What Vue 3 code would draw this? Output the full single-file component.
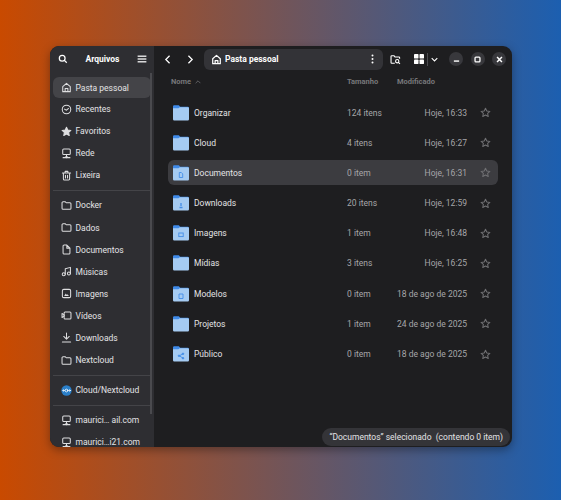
<template>
  <div class="desktop">
    <div class="window">
      <aside class="sidebar">
        <div class="side-head">
          <svg class="ico" viewBox="0 0 16 16" fill="none" stroke="#fff" stroke-width="2"><circle cx="6.7" cy="6.7" r="4.6" /><path d="M10.2 10.2 14 14" /></svg>
          <span class="app-title">Arquivos</span>
          <svg class="ico" viewBox="0 0 16 16" fill="#fff"><rect x="1" y="2.5" width="14" height="2" /><rect x="1" y="7" width="14" height="2" /><rect x="1" y="11.5" width="14" height="2" /></svg>
        </div>
        <div class="side-scroll">
          <template v-for="(group, g) in places" :key="g">
            <div v-if="g > 0" class="side-sep"></div>
            <div v-for="p in group" :key="p.label" class="place" :class="{ active: p.active }">
              <svg class="place-ico" viewBox="0 0 16 16" fill="none" stroke="#dedee0" stroke-width="1.5" stroke-linejoin="round" stroke-linecap="round" v-html="icons[p.icon]"></svg>
              <span>{{ p.label }}</span>
            </div>
          </template>
          <div class="side-bar"></div>
        </div>
      </aside>

      <main class="content">
        <div class="toolbar">
          <svg class="nav-ico" viewBox="0 0 16 16" fill="none" stroke="#fff" stroke-width="2"><path d="M10.5 2 4.500 8l6 6" /></svg>
          <svg class="nav-ico next" viewBox="0 0 16 16" fill="none" stroke="#fff" stroke-width="2"><path d="M5.500 2l6 6-6 6" /></svg>
          <div class="pathbar">
            <svg class="path-home" viewBox="0 0 16 16" fill="none" stroke="#fff" stroke-width="1.800" stroke-linejoin="round" v-html="icons.home"></svg>
            <span>Pasta pessoal</span>
            <svg class="dots" viewBox="0 0 4 14" fill="#fff"><circle cx="2" cy="2" r="1.400" /><circle cx="2" cy="7" r="1.400" /><circle cx="2" cy="12" r="1.400" /></svg>
          </div>
          <svg class="find" viewBox="0 0 16 16" fill="none" stroke="#fff" stroke-width="1.600" stroke-linejoin="round"><path d="M7 13.500H2.500a1 1 0 0 1-1-1v-9a1 1 0 0 1 1-1h3.200l1.500 1.800h5.800a1 1 0 0 1 1 1V7" /><circle cx="10.500" cy="10.500" r="2.400" /><path d="m12.300 12.300 2.200 2.200" /></svg>
          <svg class="grid" viewBox="0 0 12 12" fill="#fff"><rect x="0" y="0" width="5.400" height="5.400" rx="1" /><rect x="6.600" y="0" width="5.400" height="5.400" rx="1" /><rect x="0" y="6.600" width="5.400" height="5.400" rx="1" /><rect x="6.600" y="6.600" width="5.400" height="5.400" rx="1" /></svg>
          <i class="tool-sep"></i>
          <svg class="chev" viewBox="0 0 10 6" fill="none" stroke="#fff" stroke-width="1.500"><path d="m1 1 4 4 4-4" /></svg>
          <div class="win-btns">
            <span class="win-btn"><svg viewBox="0 0 8 8" fill="#fff"><rect x="1" y="5" width="6" height="1.600" /></svg></span>
            <span class="win-btn"><svg viewBox="0 0 8 8" fill="none" stroke="#fff" stroke-width="1.500"><rect x="1.200" y="1.200" width="5.600" height="5.600" rx="1" /></svg></span>
            <span class="win-btn"><svg viewBox="0 0 8 8" fill="none" stroke="#fff" stroke-width="1.700"><path d="m1.200 1.200 5.600 5.600M6.800 1.200 1.200 6.800" /></svg></span>
          </div>
        </div>

        <div class="cols">
          <span class="col-name">Nome
            <svg viewBox="0 0 10 6" fill="none" stroke="#77777a" stroke-width="1.200"><path d="m1 5 4-4 4 4" /></svg>
          </span>
          <span class="col-size">Tamanho</span>
          <span class="col-date">Modificado</span>
        </div>

        <div class="list">
          <div v-for="f in files" :key="f.name" class="row" :class="{ selected: f.selected }">
            <svg class="folder" viewBox="0 0 16 16">
              <path d="M0 1.500A1.200 1.200 0 0 1 1.200.3h4.600l1.400 1.400h7.600A1.200 1.200 0 0 1 16 2.900V6H0z" fill="#3f8ae8" />
              <path d="M0 3.200h5.400l1.300-1h8.100A1.200 1.200 0 0 1 16 3.400v10.900a1.200 1.200 0 0 1-1.200 1.200H1.200A1.200 1.200 0 0 1 0 14.300z" fill="#a5cbf2" />
              <g v-if="f.mark" fill="none" stroke="#438de6" stroke-width="0.900" v-html="marks[f.mark]"></g>
            </svg>
            <span class="f-name">{{ f.name }}</span>
            <span class="f-size">{{ f.size }}</span>
            <span class="f-date">{{ f.date }}</span>
            <svg class="star" viewBox="0 0 16 16" fill="none" stroke="#6f6f72" stroke-width="1.500" stroke-linejoin="round"><path d="m8 1.800 1.900 4.100 4.500.5-3.300 3 .9 4.500L8 11.600l-4 2.300.9-4.500-3.300-3 4.500-.5z" /></svg>
          </div>
        </div>

        <div class="status">“Documentos” selecionado&nbsp; (contendo 0 item)</div>
      </main>
    </div>
  </div>
</template>

<script setup>
const icons = {
  home: '<path d="M2.500 14V6.800L8 2l5.500 4.800V14zM6 14V9.500h4V14" />',
  clock: '<circle cx="8" cy="8" r="6.200" /><path d="M5 7.500 8 9l3-2.500" />',
  star: '<path fill="#dedee0" d="m8 1.800 1.900 4.100 4.500.5-3.300 3 .9 4.500L8 11.600l-4 2.300.9-4.500-3.300-3 4.500-.5z" />',
  net: '<rect x="2.500" y="1.500" width="11" height="8" rx="1.500" /><path d="M8 9.500V13M3 14h10" /><circle cx="8" cy="13" r="1" />',
  trash: '<path d="M3.500 4.500h9V13a1.500 1.500 0 0 1-1.500 1.500H5A1.500 1.500 0 0 1 3.500 13zM2 4.500h12M6 4V2h4v2M6.500 7.500v4M9.500 7.500v4" />',
  folder: '<path d="M1.500 4A1.500 1.500 0 0 1 3 2.500h3L7.500 4H13a1.500 1.500 0 0 1 1.500 1.500V12a1.500 1.500 0 0 1-1.500 1.500H3A1.500 1.500 0 0 1 1.500 12z" />',
  doc: '<path d="M3 3a1.500 1.500 0 0 1 1.500-1.500h4L13 6v7a1.500 1.500 0 0 1-1.500 1.500h-7A1.500 1.500 0 0 1 3 13zM8.500 1.500V6H13" />',
  music: '<circle cx="4" cy="12" r="2.200" /><circle cx="11.500" cy="11" r="2.200" /><path d="M6.200 12V4l7.500-2v9" />',
  image: '<rect x="2" y="2" width="12" height="12" rx="2" /><path fill="#dedee0" stroke="none" d="M4.500 11.500 7 8l1.500 2 1-1 2 2.500z" />',
  video: '<rect x="4.500" y="3" width="10" height="10" rx="1.500" /><path d="M1.500 5v6l3-2V7z" />',
  down: '<path d="M8 1.500V10M4 6.500l4 4 4-4M2 14.500h12" />',
  cloud: '<circle cx="8" cy="8" r="7.500" fill="#2a7fc9" stroke="none" /><g stroke="#fff" stroke-width="1.200"><circle cx="8" cy="8" r="2" /><circle cx="3.500" cy="8" r="1" /><circle cx="12.500" cy="8" r="1" /></g>'
}

const marks = {
  doc: '<path d="M6.300 7.500h2l1.400 1.400v3.600H6.300z" />',
  down: '<path d="M8 8v3M6.500 12.500h3" stroke-width="1.300" />',
  image: '<rect x="5.800" y="8" width="4.400" height="3.600" />',
  model: '<path d="M6 8h4v4.500H6z" />',
  share: '<path d="m10 7.800-3.600 2 3.600 2.400" /><circle cx="6" cy="9.800" r=".8" fill="#438de6" /><circle cx="10" cy="7.800" r=".8" fill="#438de6" /><circle cx="10" cy="12.200" r=".8" fill="#438de6" />'
}

const places = [
  [
    { label: 'Pasta pessoal', icon: 'home', active: true },
    { label: 'Recentes', icon: 'clock' },
    { label: 'Favoritos', icon: 'star' },
    { label: 'Rede', icon: 'net' },
    { label: 'Lixeira', icon: 'trash' }
  ],
  [
    { label: 'Docker', icon: 'folder' },
    { label: 'Dados', icon: 'folder' },
    { label: 'Documentos', icon: 'doc' },
    { label: 'Músicas', icon: 'music' },
    { label: 'Imagens', icon: 'image' },
    { label: 'Vídeos', icon: 'video' },
    { label: 'Downloads', icon: 'down' },
    { label: 'Nextcloud', icon: 'folder' }
  ],
  [{ label: 'Cloud/Nextcloud', icon: 'cloud' }],
  [
    { label: 'maurici… ail.com', icon: 'net' },
    { label: 'maurici…i21.com', icon: 'net' }
  ]
]

const files = [
  { name: 'Organizar', size: '124 itens', date: 'Hoje, 16:33' },
  { name: 'Cloud', size: '4 itens', date: 'Hoje, 16:27' },
  { name: 'Documentos', size: '0 item', date: 'Hoje, 16:31', mark: 'doc', selected: true },
  { name: 'Downloads', size: '20 itens', date: 'Hoje, 12:59', mark: 'down' },
  { name: 'Imagens', size: '1 item', date: 'Hoje, 16:48', mark: 'image' },
  { name: 'Mídias', size: '3 itens', date: 'Hoje, 16:25' },
  { name: 'Modelos', size: '0 item', date: '18 de ago de 2025', mark: 'model' },
  { name: 'Projetos', size: '1 item', date: '24 de ago de 2025' },
  { name: 'Público', size: '0 item', date: '18 de ago de 2025', mark: 'share' }
]
</script>

<style>
html,
body {
  margin: 0;
  background: #333;
}
</style>

<style scoped>
.desktop {
  width: 561px;
  height: 500px;
  box-sizing: border-box;
  padding: 46px 49px 53px 50px;
  background: linear-gradient(90deg, #c94a00, #1c5fb0);
  font-family: Roboto, "Noto Sans", sans-serif;
  font-size: 8.500px;
  overflow: hidden;
}

.window {
  display: flex;
  height: 100%;
  border-radius: 9px;
  overflow: hidden;
  background: #1e1e20;
  box-shadow: 0 3px 10px rgba(0, 0, 0, 0.35);
}

.sidebar {
  width: 104px;
  flex: none;
  display: flex;
  flex-direction: column;
  background: #2e2e32;
  color: #e4e4e6;
}

.side-head {
  height: 26px;
  flex: none;
  display: flex;
  align-items: center;
  justify-content: space-between;
  padding: 0 7px 1px 8px;
  color: #fff;
}

.ico {
  width: 10px;
  height: 10px;
}

.app-title {
  font-weight: 700;
}

.side-scroll {
  position: relative;
  flex: 1;
  padding: 4px 3px 0;
  overflow: hidden;
}

.place {
  height: 22.100px;
  display: flex;
  align-items: center;
  gap: 4px;
  padding-left: 7.500px;
  white-space: nowrap;
}

.place.active {
  background: #444448;
  border-radius: 6px;
  height: 21px;
}

.place-ico {
  width: 11px;
  height: 11px;
  flex: none;
}

.side-sep {
  height: 1px;
  background: #444448;
  margin: 4px 0 3px;
}

.side-bar {
  position: absolute;
  top: 0;
  right: 2px;
  width: 2px;
  height: 341px;
  background: #4a4a4e;
}

.content {
  position: relative;
  flex: 1;
  min-width: 0;
  color: #e3e3e5;
}

.toolbar {
  height: 26px;
  display: flex;
  align-items: center;
  padding: 0 6px 1px 9px;
}

.nav-ico {
  width: 10px;
  height: 11px;
  flex: none;
}

.nav-ico.next {
  margin-left: 12px;
}

.pathbar {
  width: 179px;
  height: 21px;
  flex: none;
  box-sizing: border-box;
  margin-left: 9px;
  display: flex;
  align-items: center;
  gap: 3px;
  padding: 0 9px 0 7px;
  background: #333337;
  border-radius: 6px;
  font-weight: 700;
  color: #fff;
}

.path-home {
  width: 11px;
  height: 11px;
}

.dots {
  width: 3px;
  height: 10px;
  margin-left: auto;
}

.find {
  width: 11px;
  height: 11px;
  flex: none;
  margin-left: 7px;
}

.grid {
  width: 10px;
  height: 10px;
  flex: none;
  margin-left: 13px;
}

.tool-sep {
  width: 1px;
  height: 13px;
  flex: none;
  margin-left: 3px;
  background: #4c4c50;
}

.chev {
  width: 7px;
  height: 5px;
  flex: none;
  margin-left: 3px;
}

.win-btns {
  display: flex;
  gap: 7.500px;
  margin-left: auto;
}

.win-btn {
  width: 14px;
  height: 14px;
  border-radius: 50%;
  background: #38383c;
  display: flex;
  align-items: center;
  justify-content: center;
}

.win-btn svg {
  width: 7px;
  height: 7px;
}

.cols {
  height: 17px;
  display: flex;
  align-items: center;
  padding-left: 17px;
  font-size: 7.500px;
  font-weight: 700;
  color: #77777a;
}

.col-name {
  width: 176px;
  display: flex;
  align-items: center;
  gap: 4px;
}

.col-name svg {
  width: 6px;
  height: 4px;
}

.col-size {
  width: 50px;
}

.list {
  padding: 10px 14px 0;
}

.row {
  height: 25px;
  margin-bottom: 5.200px;
  display: flex;
  align-items: center;
  border-radius: 6px;
  padding: 0 7px 0 5px;
}

.row.selected {
  background: #3c3c40;
}

.folder {
  width: 16px;
  height: 16px;
  flex: none;
}

.f-name {
  width: 153px;
  margin-left: 5px;
}

.f-size {
  width: 50px;
  color: #a6a6a9;
}

.f-date {
  width: 70px;
  text-align: right;
  color: #a6a6a9;
  white-space: nowrap;
}

.star {
  width: 11px;
  height: 11px;
  margin-left: 12.500px;
  flex: none;
}

.status {
  position: absolute;
  right: 2px;
  bottom: 1.500px;
  height: 17.500px;
  display: flex;
  align-items: center;
  padding: 0 7px;
  border-radius: 9px;
  background: #343438;
  color: #e3e3e5;
  white-space: nowrap;
}
</style>
